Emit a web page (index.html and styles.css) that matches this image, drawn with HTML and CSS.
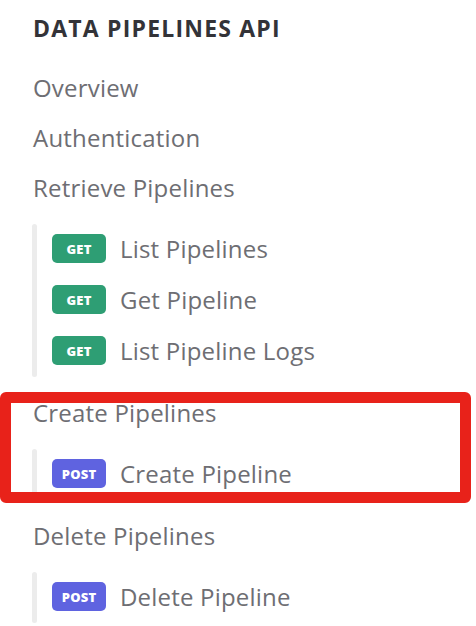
FILE: index.html
```html
<!DOCTYPE html>
<html>
<head>
<meta charset="utf-8">
<link rel="stylesheet" href="styles.css">
</head>
<body>
<nav class="sidebar">
  <div class="heading">DATA PIPELINES API</div>
  <div class="link">Overview</div>
  <div class="link">Authentication</div>
  <div class="link">Retrieve Pipelines</div>
  <div class="group">
    <div class="row"><span class="badge get">GET</span><span class="label">List Pipelines</span></div>
    <div class="row"><span class="badge get">GET</span><span class="label">Get Pipeline</span></div>
    <div class="row"><span class="badge get">GET</span><span class="label">List Pipeline Logs</span></div>
  </div>
  <div class="link">Create Pipelines</div>
  <div class="group">
    <div class="row"><span class="badge post">POST</span><span class="label">Create Pipeline</span></div>
  </div>
  <div class="link">Delete Pipelines</div>
  <div class="group">
    <div class="row"><span class="badge post">POST</span><span class="label">Delete Pipeline</span></div>
  </div>
</nav>
<div class="highlight"></div>
</body>
</html>
```

FILE: styles.css
```css
html, body {
  margin: 0;
  padding: 0;
  background: #ffffff;
}
body {
  width: 476px;
  height: 626px;
  overflow: hidden;
  position: relative;
  font-family: "Open Sans", "Liberation Sans", sans-serif;
}
.sidebar {
  display: flex;
  flex-direction: column;
  padding: 3px 0 0 33px;
}
.heading {
  height: 50px;
  line-height: 50px;
  font-size: 23px;
  font-weight: 700;
  color: #333338;
  letter-spacing: 1.2px;
  margin-bottom: 10px;
}
.link {
  height: 50px;
  line-height: 50px;
  font-size: 24px;
  letter-spacing: 0.2px;
  color: #6e6e73;
}
.group {
  position: relative;
  margin: 11px 0 11px -1px;
  padding: 10px 0 12px 20px;
  display: flex;
  flex-direction: column;
  gap: 22px;
}
.group::before {
  content: "";
  position: absolute;
  left: 0;
  top: 0;
  bottom: 0;
  width: 5px;
  border-radius: 3px;
  background: #ececec;
}
.row {
  display: flex;
  align-items: center;
  gap: 14px;
  height: 29px;
}
.badge {
  width: 54px;
  height: 29px;
  border-radius: 5px;
  display: flex;
  align-items: center;
  justify-content: center;
  color: #ffffff;
  font-size: 13px;
  font-weight: 800;
  letter-spacing: 0.2px;
}
.get { background: #2e9e74; }
.post { background: #5f63e0; }
.label {
  font-size: 24px;
  letter-spacing: 0.2px;
  color: #6e6e73;
}
.highlight {
  position: absolute;
  left: 0;
  top: 392px;
  width: 471px;
  height: 111px;
  box-sizing: border-box;
  border: 11px solid #e8221a;
  border-radius: 6px;
}
```
